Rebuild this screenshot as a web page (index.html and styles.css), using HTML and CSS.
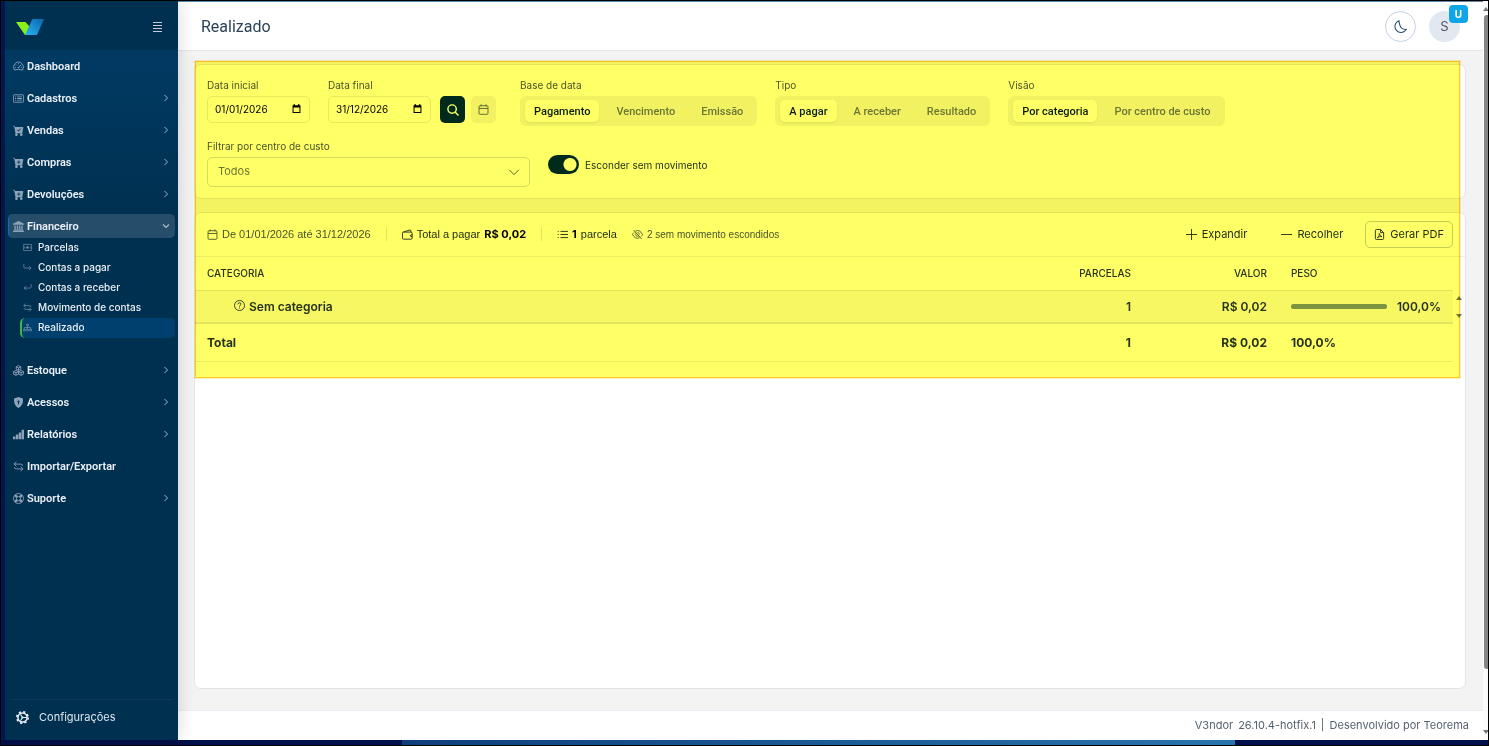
FILE: index.html
```html
<!DOCTYPE html>
<html lang="pt-BR">
<head>
<meta charset="utf-8">
<title>Realizado</title>
<meta name="viewport" content="width=device-width, initial-scale=1">
<link rel="stylesheet" href="styles.css">
</head>
<body>
<svg class="sprite" aria-hidden="true">
  <symbol id="chevron" viewBox="0 0 16 16"><path d="M5 2l6 6-6 6" class="bold"/></symbol>
  <symbol id="down" viewBox="0 0 16 16"><path d="M1.500 5 8 11.500 14.500 5" class="line"/></symbol>
  <symbol id="downbold" viewBox="0 0 16 16"><path d="M2 5l6 6 6-6" class="thick"/></symbol>
  <symbol id="gauge" viewBox="0 0 16 16"><path d="M2.2 13.2A7.2 7.2 0 1 1 13.8 13.2Q8 11 2.2 13.2zM8 9.5l3.8-4M8 3.2v1.6M2.8 9h1.5M11.7 9h1.5M4.2 5l1 1" class="line"/><circle cx="8" cy="9.6" r="1.2"/></symbol>
  <symbol id="card" viewBox="0 0 16 16"><rect x=".6" y="2.6" width="14.8" height="10.800" rx="1" class="line"/><path d="M3 5h1.5v1.2H3zM6 5h7v1.2H6zM3 7.4h1.5v1.2H3zM6 7.4h7v1.2H6zM3 9.8h1.5V11H3zM6 9.8h7V11H6z"/></symbol>
  <symbol id="cart" viewBox="0 0 16 16"><path fill-rule="evenodd" d="M.5 1a.5.5 0 0 0 0 1h1.11l.4 1.6 1.5 8A.5.5 0 0 0 4 12h1a2 2 0 1 0 0 4 2 2 0 0 0 0-4h7a2 2 0 1 0 0 4 2 2 0 0 0 0-4h1a.5.5 0 0 0 .49-.4l1.5-8A.5.5 0 0 0 14.5 3H2.9l-.4-1.6A.5.5 0 0 0 2 1zM9 5v2h2v1H9v2H8V8H6V7h2V5z"/></symbol>
  <symbol id="cartcheck" viewBox="0 0 16 16"><path fill-rule="evenodd" d="M.5 1a.5.5 0 0 0 0 1h1.11l.4 1.6 1.5 8A.5.5 0 0 0 4 12h1a2 2 0 1 0 0 4 2 2 0 0 0 0-4h7a2 2 0 1 0 0 4 2 2 0 0 0 0-4h1a.5.5 0 0 0 .49-.4l1.5-8A.5.5 0 0 0 14.5 3H2.9l-.4-1.6A.5.5 0 0 0 2 1zM11.4 5.9 8 9.3 6.1 7.4l.8-.7L8 7.8l2.7-2.7z"/></symbol>
  <symbol id="bank" viewBox="0 0 16 16"><path d="M8 0 0 4v1.5h16V4zM2 6.5h2V12H2zM5.5 6.5h2V12h-2zM8.700 6.500h2V12h-2zM12 6.500h2V12h-2zM1 12.500h14V14H1zM0 14.500h16V16H0z"/></symbol>
  <symbol id="cash" viewBox="0 0 16 16"><rect x=".6" y="2.500" width="14.8" height="11" rx="1" class="line"/><circle cx="8" cy="8" r="2.200"/><path d="M3 6v4M13 6v4" class="line"/></symbol>
  <symbol id="outarrow" viewBox="0 0 16 16"><path d="M1.500 2v5q0 2 2 2H14M10.500 5.500 14 9l-3.500 3.500" class="line"/></symbol>
  <symbol id="inarrow" viewBox="0 0 16 16"><path d="M14.500 2v5q0 2-2 2H2M5.500 5.500 2 9l3.500 3.500" class="line"/></symbol>
  <symbol id="swap" viewBox="0 0 16 16"><path d="M5 1 1.500 4.500 5 8M1.500 4.500H11q3 0 3 2.500M11 8 14.500 11.500 11 15M14.500 11.500H5q-3 0-3-2.500" class="line"/></symbol>
  <symbol id="tree" viewBox="0 0 16 16"><path d="M6.500 2h3v3h-3zM1 11h3v3H1zM6.500 11h3v3h-3zM12 11h3v3h-3zM8 5v6M2.500 11V8h11v3" class="line"/></symbol>
  <symbol id="boxes" viewBox="0 0 16 16"><path d="M8 1l3.300 1.600v3.600L8 7.800 4.700 6.200V2.600zM4.300 8l3.500 1.600v3.700L4.300 15 .8 13.300V9.600zM11.700 8l3.500 1.600v3.700L11.700 15l-3.500-1.700V9.600zM4.700 2.600 8 4.300l3.300-1.700M8 4.300v3.500M.8 9.600l3.500 1.700 3.500-1.700 3.900 1.700 3.500-1.700M4.300 11.300V15M11.700 11.300V15" class="line"/></symbol>
  <symbol id="shield" viewBox="0 0 16 16"><path fill-rule="evenodd" d="M8 0C6 1 3.500 1.700 1.600 2c-.8 6.500 1.600 11 6.400 14 4.800-3 7.200-7.500 6.400-14C12.500 1.700 10 1 8 0zm0 5a1.500 1.500 0 0 1 .6 2.900L9 10.500H7l.4-2.600A1.500 1.500 0 0 1 8 5z"/></symbol>
  <symbol id="bars" viewBox="0 0 16 16"><path d="M0 11h3.500v4H0zM4.200 8h3.500v7H4.200zM8.400 5h3.500v10H8.400zM12.500 1H16v14h-3.500z"/></symbol>
  <symbol id="buoy" viewBox="0 0 16 16"><circle cx="8" cy="8" r="7.300" class="line"/><circle cx="8" cy="8" r="3" class="line"/><path d="M3 3l3 3M13 3l-3 3M3 13l3-3M13 13l-3-3" class="heavy"/></symbol>
  <symbol id="gear" viewBox="0 0 16 16"><circle cx="8" cy="8" r="5.600" class="bold"/><circle cx="8" cy="8" r="7" class="cogs"/><circle cx="8" cy="8" r="1.200"/><path d="M8 8 5.500 4M8 8l-2.500 4M8 8h5" class="line"/></symbol>
  <symbol id="calendar" viewBox="0 0 16 16"><rect x="1.500" y="2.500" width="13" height="12.500" rx="1.500" class="line"/><path d="M1.500 6.500h13M4.500.5v3M11.500.5v3" class="line"/></symbol>
  <symbol id="picker" viewBox="0 0 16 16"><path fill-rule="evenodd" d="M3 0h2v2h6V0h2v2h2v14H1V2h2zM2.800 6v8.200h10.400V6z"/></symbol>
  <symbol id="search" viewBox="0 0 16 16"><circle cx="6.800" cy="6.800" r="5.600" class="bold"/><path d="M11 11l4.300 4.300" class="bold"/></symbol>
  <symbol id="wallet" viewBox="0 0 16 16"><path d="M2 4.500h11q1.800 0 1.800 1.800V13q0 1.800-1.800 1.800H2.500Q.7 14.800.7 13V6Q.7 4.600 2 4.300L11.500 1.500q1.300-.3 1.300 1v2M14.800 8.500h-1.500q-1 0-1 1.300t1 1.200h1.500" class="line"/></symbol>
  <symbol id="list" viewBox="0 0 16 16"><path d="M5 3.500h11M5 8h11M5 12.500h11M1 3.500h1.500M1 8h1.500M1 12.500h1.500" class="line"/></symbol>
  <symbol id="eyeoff" viewBox="0 0 16 16"><path d="M5 3.200Q11-.2 15.300 8q-.8 1.500-2 2.800M11 12.700Q5 15.500.7 8 1.600 6.200 3 5M2 1.500l12 13M6 6.200A2.700 2.700 0 0 0 9.800 10M8 5.200A2.700 2.700 0 0 1 10.700 8" class="line"/></symbol>
  <symbol id="plus" viewBox="0 0 16 16"><path d="M8 0v16M0 8h16" class="line"/></symbol>
  <symbol id="minus" viewBox="0 0 16 16"><path d="M0 8h16" class="line"/></symbol>
  <symbol id="pdf" viewBox="0 0 16 16"><path d="M9.500.8H3.500Q2 .8 2 2.300v11.400q0 1.500 1.500 1.500h9q1.500 0 1.500-1.500V5.300zv4.500H14M4.700 12.800C7 11 8 8.500 7.600 6.500c1 3 2 4 3.900 4.500-2.500-.4-4.700.3-6.800 1.800z" class="line"/></symbol>
  <symbol id="question" viewBox="0 0 16 16"><circle cx="8" cy="8" r="7.300" class="line"/><path d="M5.700 6.200Q5.900 4 8 4t2.200 1.900Q10.200 7 9 7.700T8 9.700M8 11v1.400" class="line"/></symbol>
  <symbol id="moon" viewBox="0 0 16 16"><path d="M6 .8A7.500 7.500 0 1 0 15.200 11.500Q12 12 9.500 10T6 .8z" class="line"/></symbol>
</svg>

<div class="desktop">
  <div class="app">
    <aside class="sidebar">
      <div class="brand">
        <svg class="logo" viewBox="0 0 28 16" role="img" aria-label="V3ndor">
          <defs><linearGradient id="blue" x1="1" y1="0" x2="0" y2="1"><stop offset="0" stop-color="#0b63ad"/><stop offset="1" stop-color="#28b4f0"/></linearGradient></defs>
          <path d="M0 3h9.500l4.500 5-4 8H9z" fill="#8af01c"/>
          <path d="M17 0h11l-7 16H9l6-13q1-3 2-3z" fill="url(#blue)"/>
        </svg>
        <button class="burger" aria-label="Recolher menu"><i></i><i></i><i></i><i></i></button>
      </div>
      <nav class="nav">
        <a href="#"><svg><use href="#gauge"/></svg><span>Dashboard</span></a>
        <a href="#"><svg><use href="#card"/></svg><span>Cadastros</span><svg class="chev"><use href="#chevron"/></svg></a>
        <a href="#"><svg><use href="#cartcheck"/></svg><span>Vendas</span><svg class="chev"><use href="#chevron"/></svg></a>
        <a href="#"><svg><use href="#cart"/></svg><span>Compras</span><svg class="chev"><use href="#chevron"/></svg></a>
        <a href="#"><svg><use href="#cart"/></svg><span>Devoluções</span><svg class="chev"><use href="#chevron"/></svg></a>
        <div class="group">
          <a href="#" class="open"><svg><use href="#bank"/></svg><span>Financeiro</span><svg class="chev"><use href="#downbold"/></svg></a>
          <div class="sub">
            <a href="#"><svg><use href="#cash"/></svg>Parcelas</a>
            <a href="#"><svg><use href="#outarrow"/></svg>Contas a pagar</a>
            <a href="#"><svg><use href="#inarrow"/></svg>Contas a receber</a>
            <a href="#"><svg><use href="#swap"/></svg>Movimento de contas</a>
            <a href="#" class="current"><svg><use href="#tree"/></svg>Realizado</a>
          </div>
        </div>
        <a href="#"><svg><use href="#boxes"/></svg><span>Estoque</span><svg class="chev"><use href="#chevron"/></svg></a>
        <a href="#"><svg><use href="#shield"/></svg><span>Acessos</span><svg class="chev"><use href="#chevron"/></svg></a>
        <a href="#"><svg><use href="#bars"/></svg><span>Relatórios</span><svg class="chev"><use href="#chevron"/></svg></a>
        <a href="#"><svg><use href="#swap"/></svg><span>Importar/Exportar</span></a>
        <a href="#"><svg><use href="#buoy"/></svg><span>Suporte</span><svg class="chev"><use href="#chevron"/></svg></a>
      </nav>
      <a href="#" class="settings"><svg><use href="#gear"/></svg>Configurações</a>
    </aside>

    <div class="page">
      <header class="topbar">
        <h1>Realizado</h1>
        <div class="user">
          <button class="theme" aria-label="Tema escuro"><svg><use href="#moon"/></svg></button>
          <button class="avatar">S<span class="badge">U</span></button>
        </div>
      </header>

      <main class="content">
        <section class="card filters">
          <div class="row">
            <div class="field date">
              <label for="start">Data inicial</label>
              <div class="datebox"><input id="start" type="text" value="01/01/2026"><svg><use href="#picker"/></svg></div>
            </div>
            <div class="field date">
              <label for="end">Data final</label>
              <div class="datebox"><input id="end" type="text" value="31/12/2026"><svg><use href="#picker"/></svg></div>
            </div>
            <div class="actions">
              <button class="square dark" aria-label="Buscar"><svg><use href="#search"/></svg></button>
              <button class="square" aria-label="Período"><svg><use href="#calendar"/></svg></button>
            </div>
            <div class="field" role="group" aria-labelledby="base">
              <span class="label" id="base">Base de data</span>
              <div class="segment"><button class="on">Pagamento</button><button>Vencimento</button><button>Emissão</button></div>
            </div>
            <div class="field" role="group" aria-labelledby="kind">
              <span class="label" id="kind">Tipo</span>
              <div class="segment"><button class="on">A pagar</button><button>A receber</button><button>Resultado</button></div>
            </div>
            <div class="field" role="group" aria-labelledby="view">
              <span class="label" id="view">Visão</span>
              <div class="segment"><button class="on">Por categoria</button><button>Por centro de custo</button></div>
            </div>
          </div>
          <div class="row">
            <div class="field cost">
              <label for="cost">Filtrar por centro de custo</label>
              <div class="selectbox"><select id="cost"><option>Todos</option></select><svg><use href="#down"/></svg></div>
            </div>
            <label class="switch"><input type="checkbox" checked>Esconder sem movimento</label>
          </div>
        </section>

        <section class="card report">
          <div class="toolbar">
            <span class="item soft"><svg><use href="#calendar"/></svg>De 01/01/2026 até 31/12/2026</span>
            <span class="item ruled"><svg><use href="#wallet"/></svg>Total a pagar <b>R$ 0,02</b></span>
            <span class="item ruled"><svg><use href="#list"/></svg><b>1</b> parcela</span>
            <span class="item soft small"><svg><use href="#eyeoff"/></svg>2 sem movimento escondidos</span>
            <div class="tools">
              <button><svg><use href="#plus"/></svg>Expandir</button>
              <button><svg><use href="#minus"/></svg>Recolher</button>
              <button class="outlined"><svg><use href="#pdf"/></svg>Gerar PDF</button>
            </div>
          </div>
          <div class="tablewrap">
            <table>
              <colgroup><col><col class="num"><col class="num"><col class="weight"></colgroup>
              <thead><tr><th>CATEGORIA</th><th class="right">PARCELAS</th><th class="right">VALOR</th><th>PESO</th></tr></thead>
              <tbody><tr>
                <td class="child"><svg><use href="#question"/></svg>Sem categoria</td>
                <td class="right">1</td><td class="right">R$ 0,02</td>
                <td><div class="share"><span class="bar"><span style="width:100%"></span></span>100,0%</div></td>
              </tr></tbody>
              <tfoot><tr><td>Total</td><td class="right">1</td><td class="right">R$ 0,02</td><td>100,0%</td></tr></tfoot>
            </table>
            <div class="spinner"><i class="up"></i><i class="dn"></i></div>
          </div>
        </section>
        <div class="highlight"></div>
      </main>

      <footer class="foot"><span>V3ndor</span><span>26.10.4-hotfix.1</span><span>|</span><span>Desenvolvido por Teorema</span></footer>
    </div>
    <div class="scroll"><i class="up"></i><span></span><i class="dn"></i></div>
  </div>
  <div class="taskbar"><span></span></div>
</div>
</body>
</html>
```

FILE: styles.css
```css
* { box-sizing: border-box; }
body { margin: 0; background: #000; font-family: Inter, "Liberation Sans", sans-serif; font-size: 11px; color: #1d2b38; }
button, input, select { font: inherit; color: inherit; }
button { border: 0; background: none; padding: 0; }
a { color: inherit; text-decoration: none; }
svg { width: 11px; height: 11px; fill: currentColor; flex: none; }
.sprite { position: absolute; width: 0; height: 0; }
.line { fill: none; stroke: currentColor; stroke-width: 1.3; }
.bold { fill: none; stroke: currentColor; stroke-width: 1.9; }
.thick { fill: none; stroke: currentColor; stroke-width: 2.4; }
.heavy { fill: none; stroke: currentColor; stroke-width: 3.4; }
.cogs { fill: none; stroke: currentColor; stroke-width: 2; stroke-dasharray: 2.75 2.75; }

.desktop { height: 100vh; padding: 1px; display: flex; flex-direction: column; background: #000; }
.app { flex: 1; min-height: 0; display: flex; border-left: 4px solid #001a55; }
.taskbar { height: 5px; background: #00104a; padding: 0 17% 0 27%; }
.taskbar span { display: block; height: 100%; background: linear-gradient(90deg, #0d3f7c, #2a74ae); }

.sidebar { width: 173px; flex: none; display: flex; flex-direction: column; color: #e9eff5; background: linear-gradient(#003a63 50px, #003050 220px); box-shadow: 0 0 16px rgba(0, 0, 0, .16); position: relative; z-index: 1; }
.brand { height: 49px; padding: 2px 16px 0 11px; display: flex; align-items: center; justify-content: space-between; background: #00304f; }
.logo { width: 28px; height: 16px; }
.burger { width: 9px; display: grid; gap: 2px; }
.burger i { height: 1px; background: #c3d0db; }
.nav { flex: 1; padding: 4px 3px 0; display: flex; flex-direction: column; gap: 8px; font-family: Roboto, sans-serif; font-weight: 600; }
.nav > a, .open { height: 24px; padding: 0 5px; display: flex; align-items: center; gap: 3px; border-radius: 5px; }
.nav svg { color: #8ba2b8; }
.nav .chev { width: 8px; height: 8px; margin-left: auto; color: #a9bccb; }
.nav .open { background: #264e6b; border-left: 1px solid #0e70b5; padding-left: 4px; }
.group { padding-bottom: 12px; }
.sub { padding-left: 12px; font-family: Inter, sans-serif; font-size: 10px; font-weight: 500; }
.sub a { height: 20px; padding: 0 0 2px 3px; display: flex; align-items: center; gap: 6px; border-radius: 5px; }
.sub svg { width: 9px; height: 9px; color: #7590a8; }
.sub .current { background: #00406f; border-left: 2px solid #3fb83f; padding-left: 1px; }
.settings { margin: 0 6px; height: 41px; padding: 0 5px 6px; display: flex; align-items: center; gap: 10px; border-top: 1px solid #083d5e; color: #dbe5ed; }
.settings svg { width: 13px; height: 13px; color: #e9eff5; }

.page { flex: 1; min-width: 0; display: flex; flex-direction: column; background: #f3f3f3; }
.topbar { height: 50px; flex: none; padding: 0 23px 0 23px; display: flex; align-items: center; justify-content: space-between; background: #fff; border-bottom: 1px solid #e6e6ea; border-top: 1px solid #5b88a8; }
h1 { margin: 0; font: 400 16px Roboto, sans-serif; color: #2c4257; }
.user { display: flex; gap: 13px; }
.theme, .avatar { width: 31px; height: 31px; border-radius: 50%; display: grid; place-items: center; }
.theme { border: 1px solid #c5d3e2; color: #24506e; }
.theme svg { width: 13px; height: 13px; }
.avatar { background: #e2e8f0; font-size: 13px; color: #4a5568; position: relative; }
.badge { position: absolute; top: -6px; right: -8px; width: 19px; height: 18px; border-radius: 4px; background: #0ea5e9; color: #fff; font-size: 10px; font-weight: 700; line-height: 18px; }

.content { flex: 1; min-height: 0; padding: 13px 17px 21px 16px; display: flex; flex-direction: column; gap: 13px; position: relative; }
.card { background: #fff; border: 1px solid #e4e4e6; border-radius: 7px; }
.highlight { position: absolute; top: 10px; left: 17px; right: 23px; height: 317px; border: 1px solid #ffc828; outline: 1px solid rgba(255, 210, 60, .35); background: #ffff66; mix-blend-mode: multiply; }

.filters { padding: 13px 12px 11px; display: grid; gap: 13px; }
.row { display: flex; gap: 18px; align-items: flex-start; }
.field { display: flex; flex-direction: column; }
.field > label, .label { height: 18px; line-height: 14px; font-size: 10px; color: #4a5568; }
.date { width: 103px; }
.datebox { height: 27px; padding: 0 8px 2px 7px; display: flex; align-items: center; border: 1px solid #e8e8ea; border-radius: 5px; color: #000; }
.datebox input { flex: 1; min-width: 0; width: 0; padding: 0; border: 0; background: none; font-size: 10px; }
.datebox svg { width: 9px; height: 9px; }
.actions { display: flex; gap: 6px; padding-top: 18px; margin: 0 6px 0 -9px; }
.square { width: 25px; height: 27px; display: grid; place-items: center; border-radius: 5px; background: #f1f1f3; color: #56626f; }
.square.dark { background: #002b45; color: #fff; }
.dark svg { width: 12px; height: 12px; }
.segment { height: 30px; padding: 4px 5px; display: flex; gap: 8px; border-radius: 6px; background: #f1f1f3; color: #6b7780; }
.segment button { padding: 0 9px; border-radius: 5px; font-family: Roboto, sans-serif; font-weight: 500; }
.segment .on { background: #fff; color: #0b1d2a; box-shadow: 0 1px 2px rgba(0, 0, 0, .08); }
.cost { width: 323px; }
.selectbox { position: relative; height: 30px; }
.selectbox select { width: 100%; height: 100%; padding: 0 10px 2px; border: 1px solid #d6dade; border-radius: 5px; background: none; appearance: none; color: #6b7780; }
.selectbox svg { position: absolute; right: 10px; top: 9px; width: 12px; height: 12px; color: #56626f; pointer-events: none; }
.switch { display: flex; align-items: center; gap: 6px; padding-top: 16px; font-size: 10px; color: #26333f; }
.switch input { appearance: none; margin: 0; width: 31px; height: 19px; border-radius: 10px; background: radial-gradient(circle at 22px 50%, #fff 6px, #002b45 7px); }

.report { flex: 1; min-height: 0; }
.toolbar { height: 44px; padding: 0 12px 1px; display: flex; align-items: center; border-bottom: 1px solid #ededef; }
.item { display: flex; align-items: center; gap: 4px; white-space: nowrap; margin-right: 15px; font-family: "Liberation Sans", Arial, sans-serif; }
.item b { font-family: Inter, sans-serif; font-weight: 700; color: #000; }
.soft { color: #4a5568; }
.small { font-size: 10px; }
.ruled { padding: 0 0 0 15px; border-left: 1px solid #e4e4e6; line-height: 14px; }
.tools { margin-left: auto; display: flex; gap: 10px; }
.tools button { height: 27px; padding: 0 12px; display: flex; align-items: center; gap: 5px; }
.tools .outlined { padding: 0 8px; border: 1px solid #c3cdd2; border-radius: 5px; }
.tablewrap { display: flex; }
table { flex: 1; border-collapse: collapse; table-layout: fixed; color: #26333f; }
.num { width: 136px; }
.weight { width: 172px; }
th, td { padding: 0 12px; text-align: left; }
th { height: 33px; font-size: 10px; font-weight: 500; border-bottom: 1px solid #e4e4e6; }
td { font-size: 12px; font-weight: 600; }
tbody td { height: 33px; background: #f7f7f7; border-bottom: 2px solid #e4e4e6; }
tfoot td { height: 38px; font-weight: 700; border-bottom: 1px solid #ededef; }
.right { text-align: right; }
.child { padding-left: 39px; }
.child svg { margin-right: 4px; }
.share { display: flex; align-items: center; gap: 10px; }
.bar { width: 96px; height: 5px; border-radius: 3px; background: #e4e4e6; }
.bar span { display: block; height: 100%; border-radius: 3px; background: #7b9499; }
.spinner { width: 12px; padding: 39px 0 0 3px; display: grid; gap: 14px; align-content: start; }
.up, .dn { border: 3px solid transparent; width: 0; height: 0; }
.up { border-top: 0; border-bottom: 4px solid #777; }
.dn { border-bottom: 0; border-top: 4px solid #777; }

.foot { height: 30px; flex: none; padding: 0 14px 2px; display: flex; align-items: center; justify-content: flex-end; gap: 5px; background: #fff; border-top: 1px solid #e9eef4; color: #56626f; }
.scroll { width: 5px; padding: 6px 0; display: flex; flex-direction: column; gap: 4px; background: #fbfbfb; overflow: hidden; }
.scroll span { height: 90%; margin-left: 1px; border-radius: 3px 0 0 3px; background: #858585; }
.scroll .dn { margin-top: auto; }
```
